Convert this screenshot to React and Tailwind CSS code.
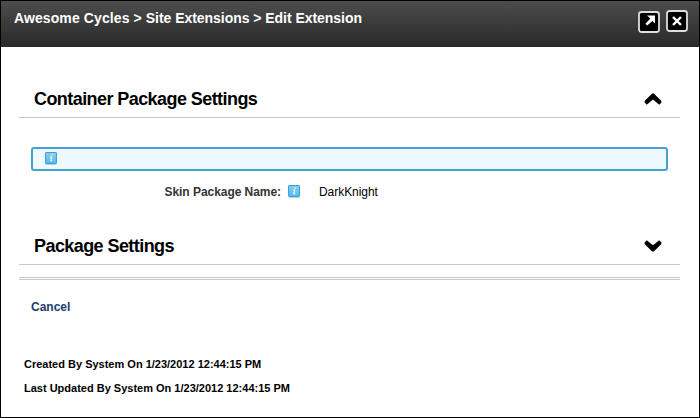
function InfoIcon() {
  return (
    <svg width="14" height="15" viewBox="0 0 14 15" className="block shrink-0">
      <defs>
        <linearGradient id="info" x1="0" y1="0" x2="0" y2="1">
          <stop offset="0" stopColor="#8ccdec" />
          <stop offset="1" stopColor="#4fbdf3" />
        </linearGradient>
      </defs>
      <path d="M1.5 13.5h11" stroke="#8fa3ad" strokeOpacity=".5" />
      <rect x="1.5" y="1.5" width="11" height="11" rx=".6" fill="url(#info)" stroke="#3c9fd6" />
      <path d="M7.3 4h1.5M6 6.2h1.7L6.8 9.7h1.4" fill="none" stroke="#f2fbff" strokeWidth="1.2" />
    </svg>
  );
}

function Chevron({ down = false }) {
  return (
    <svg width="18" height="12" viewBox="0 0 18 12" className="shrink-0">
      <path
        d={
          down
            ? "M.5 2.6 2.8.3 9 5.2 15.2.3 17.5 2.6 17.2 4.2 9.8 11.4H8.2L.8 4.2z"
            : "M.5 9.4 2.8 11.7 9 6.6 15.2 11.7 17.5 9.4 17.2 7.8 9.8.5H8.2L.8 7.8z"
        }
        fill="#000"
      />
    </svg>
  );
}

function SectionHeading({ title, down }) {
  return (
    <div className="flex h-[37px] items-center justify-between border-b border-[#c8c8c8] pr-[18px] pl-[15px]">
      <h2 className="text-[18px] leading-[36px] font-bold tracking-[-0.57px] whitespace-nowrap">{title}</h2>
      <Chevron down={down} />
    </div>
  );
}

export default function App() {
  return (
    <div className="h-[418px] w-[700px] overflow-hidden border border-black bg-white font-['Liberation_Sans',Arial,sans-serif] text-black">
      <header className="flex h-[46px] items-start justify-between bg-linear-to-b from-[#4d4d4d] to-[#292929] pr-[11px] pl-[13px]">
        <h1 className="pt-[9px] text-[14px] leading-4 font-bold whitespace-nowrap text-white">
          <span className="tracking-[0.1px]">Awesome Cycles &gt; </span>
          <span className="tracking-[-0.04px]">Site Extensions &gt; Edit Extension</span>
        </h1>
        <div className="flex gap-[6px] pt-[9px]">
          <svg width="22" height="23" viewBox="0 0 22 23">
            <rect x="1" y="2" width="20" height="20" rx="2.5" fill="#000" stroke="#dedede" strokeWidth="1.8" />
            <path d="M9 5.5h8v8l-2.6-2.6-5.2 4.5-1.7-1.7 4.8-5.1z" fill="#fff" />
          </svg>
          <svg width="22" height="23" viewBox="0 0 22 23">
            <rect x="1" y="1" width="20" height="20" rx="2.5" fill="#000" stroke="#dedede" strokeWidth="1.8" />
            <path d="m7 7 8 8M15 7l-8 8" stroke="#fff" strokeWidth="2.4" />
          </svg>
        </div>
      </header>
      <main className="pt-[34px] pr-[19px] pl-[18px]">
        <SectionHeading title="Container Package Settings" />
        <div className="mt-[29px] mr-[12px] ml-[12px] flex h-[24px] items-center rounded-[3px] border-2 border-[#45a1d1] bg-[#edf8ff] pb-px pl-[11px]">
          <InfoIcon />
        </div>
        <div className="mt-[10px] flex h-[22px] items-center text-[12px]">
          <span className="w-[262px] text-right font-bold tracking-[-0.05px] text-[#333]">Skin Package Name:</span>
          <span className="ml-[6px] pb-px"><InfoIcon /></span>
          <span className="ml-[18px] tracking-[-0.05px]">DarkKnight</span>
        </div>
        <div className="mt-[25px]">
          <SectionHeading title="Package Settings" down />
        </div>
        <div className="mt-[12px] h-[3px] border-y border-[#c8c8c8]" />
        <a className="mt-[19px] ml-[12px] block w-fit text-[12px] leading-4 font-bold text-[#1b3d66]">Cancel</a>
        <footer className="mt-[37px] ml-[5px] text-[11px] leading-6 font-bold whitespace-nowrap">
          <p>Created By System On 1/23/2012 12:44:15 PM</p>
          <p>Last Updated By System On 1/23/2012 12:44:15 PM</p>
        </footer>
      </main>
    </div>
  );
}
